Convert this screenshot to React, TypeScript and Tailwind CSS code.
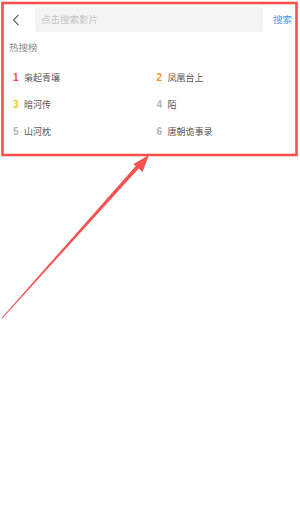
import React from "react";

const items = [
  { n: 1, t: "枭起青壤", c: "text-[#f5474b]" },
  { n: 2, t: "凤凰台上", c: "text-[#f7941e]" },
  { n: 3, t: "暗河传", c: "text-[#f8c22c]" },
  { n: 4, t: "陌", c: "text-[#b5b5b5]" },
  { n: 5, t: "山河枕", c: "text-[#b5b5b5]" },
  { n: 6, t: "唐朝诡事录", c: "text-[#b5b5b5]" },
];

export default function App() {
  return (
    <div
      className="relative w-[300px] h-[524px] bg-white overflow-hidden"
      style={{ fontFamily: '"Noto Sans CJK SC", "Noto Sans", sans-serif' }}
    >
      <div className="flex items-center h-[25px] mt-[7px] pl-[12px] pr-[8px]">
        <svg width="8" height="12" viewBox="0 0 8 12" className="shrink-0">
          <path d="M6.5 0.8 L1.5 6 L6.5 11.2" fill="none" stroke="#555" strokeWidth="1.1" />
        </svg>
        <div className="ml-[15px] w-[228px] h-[25px] rounded-[3px] bg-[#f4f4f4] flex items-center pl-[6px]">
          <span className="text-[9.5px] leading-none text-[#c4c4c4]">点击搜索影片</span>
        </div>
        <span className="ml-auto text-[9.5px] leading-none text-[#3d9df2]">搜索</span>
      </div>
      <div className="pl-[9px] mt-[11px] text-[9.5px] leading-none text-[#8a8a8a]">热搜榜</div>
      <div className="grid grid-cols-2 mt-[20px] pl-[13px] gap-y-[17px]">
        {items.map((it) => (
          <div key={it.n} className="flex items-center h-[10px] leading-none">
            <span
              className={`w-[11px] text-[10px] font-bold ${it.c}`}
              style={{ fontFamily: '"Liberation Sans", sans-serif' }}
            >
              {it.n}
            </span>
            <span className="text-[9px] text-[#555]">{it.t}</span>
          </div>
        ))}
      </div>
      <svg
        className="absolute inset-0 pointer-events-none"
        width="300"
        height="524"
        viewBox="0 0 300 524"
      >
        <rect x="2.5" y="3" width="294" height="152" fill="none" stroke="#f4524f" strokeWidth="2.6" />
        <polygon points="1.5,318 2.3,318.6 140.5,166.5 138,163.5" fill="#f4524f" />
        <polygon points="149,155 133.5,164 142.5,172" fill="#f4524f" />
      </svg>
    </div>
  );
}
